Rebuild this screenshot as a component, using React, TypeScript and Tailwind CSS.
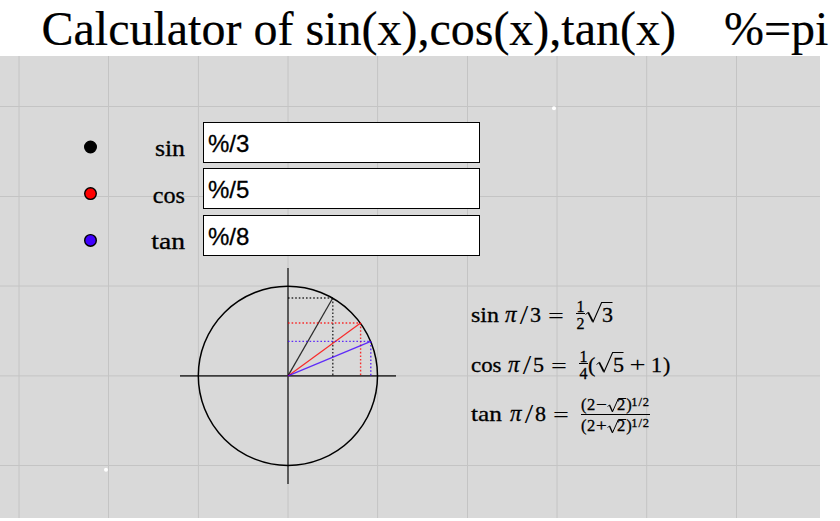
import type { ReactNode } from 'react';

const verticals = [19, 108.5, 198.4, 288, 377.6, 467.5, 557, 646.7, 736.5];
const horizontals = [50.5, 140.5, 230, 319.9, 409.5];

const functions = [
  { name: 'sin', value: '%/3', row: 'mb-[5px]', label: 'top-[7px] scale-x-[1.12]' },
  { name: 'cos', value: '%/5', row: 'mb-[6px]', label: 'top-[8px] scale-x-[1.05]' },
  { name: 'tan', value: '%/8', row: '', label: 'top-[7px] scale-x-[1.2]' },
];

// Ends of the three radii on the unit circle, relative to the board.
const rays = [
  { x: 332.8, y: 242, color: '#000000' },
  { x: 360.6, y: 267, color: '#ff0000' },
  { x: 370.8, y: 285.4, color: '#4000ff' },
];

function Board() {
  return (
    <svg className="absolute inset-0" width="820" height="462" viewBox="0 0 820 462" fill="none">
      <g stroke="#c4c4c4" strokeWidth="1">
        {verticals.map((x) => (
          <line key={x} x1={x} x2={x} y1="0" y2="462" />
        ))}
        {horizontals.map((y) => (
          <line key={y} x1="0" x2="820" y1={y} y2={y} />
        ))}
      </g>
      <circle cx="554" cy="52.3" r="2" fill="#fff" />
      <circle cx="106" cy="413.8" r="2" fill="#fff" />
      <path d="M180 319.9H396M288 212V428" stroke="#000" strokeOpacity=".7" strokeWidth="1.6" />
      <circle cx="287.9" cy="319.8" r="89.6" stroke="#000" strokeWidth="1.5" />
      {rays.map(({ x, y, color }) => (
        <g key={color} stroke={color} strokeOpacity=".8">
          <path d={`M288 319.9L${x} ${y}`} strokeWidth="1.25" />
          <path d={`M288 ${y}H${x}M${x} ${y}V320`} strokeWidth="1.4" strokeDasharray="1.6 2" />
        </g>
      ))}
      {/* Handles beside the three inputs */}
      <g stroke="#000" strokeWidth="1.4">
        <circle cx="90.5" cy="91" r="5.8" fill="#000" />
        <circle cx="90.5" cy="137.6" r="5.8" fill="#ff0000" />
        <circle cx="90.5" cy="184.4" r="5.8" fill="#4000ff" />
      </g>
    </svg>
  );
}

function Root({ className, children, small = false }: { className: string; children: ReactNode; small?: boolean }) {
  return (
    <span className={`relative inline-flex justify-end ${className}`}>
      {small ? (
        <svg className="absolute left-0 top-[2px]" width="20" height="16" viewBox="0 0 20 16" fill="none" stroke="#000">
          <path d="M.5 9.5L2.5 8" strokeWidth=".8" />
          <path d="M2.5 8L5.4 14.5" strokeWidth="1.4" />
          <path d="M5.4 15L11.4 1.5H19" strokeWidth="1" />
        </svg>
      ) : (
        <svg className="absolute left-0 top-[1px]" width="29" height="24" viewBox="0 0 29 24" fill="none" stroke="#000">
          <path d="M.5 13.5L3.3 11.4" strokeWidth=".9" />
          <path d="M3.2 11.4L7.8 20.5" strokeWidth="1.8" />
          <path d="M7.8 21.5L16.6 1.5H27.5" strokeWidth="1.1" />
        </svg>
      )}
      {children}
    </span>
  );
}

function SmallFraction({ bottom }: { bottom: string }) {
  return (
    <span className="flex w-[9px] flex-col items-center text-[16px] leading-[15px]">
      <span className="h-[14px]">1</span>
      <span className="h-px w-[9px] bg-black" />
      <span className="mt-[2px]">{bottom}</span>
    </span>
  );
}

function Left({ name, digit, width, stretch }: { name: string; digit: string; width: string; stretch: string }) {
  return (
    <>
      <span className={width}>
        <span className={`inline-block origin-left ${stretch}`}>{name}</span>
      </span>
      <span className="w-[13px] text-[23px] italic">π</span>
      <span className="w-[12px] origin-center scale-x-[1.45] scale-y-[1.3] text-center text-[21px] [-webkit-text-stroke:0px]">/</span>
      <span className="w-[18px]">{digit}</span>
      <span className="mt-[2px] w-[28px] origin-left scale-x-[1.28] [-webkit-text-stroke:0px]">=</span>
    </>
  );
}

function Power({ sign }: { sign: string }) {
  return (
    <span className="relative top-px flex h-[20px] items-center text-[16.5px] leading-[20px]">
      <span className="w-[6px]">(</span>
      <span className="w-[9px]">2</span>
      <span className="w-[11px] origin-center scale-x-[1.15] text-center">{sign}</span>
      <Root small className="w-[20px] pr-[1px]">2</Root>
      <span className="w-[5px]">)</span>
      <span className="relative top-[-3px] text-[12.5px] tracking-[0.9px]">1/2</span>
    </span>
  );
}

export default function App() {
  return (
    <main className="h-[521px] w-[840px] overflow-hidden bg-white font-['Liberation_Serif',serif] text-black">
      <h1 className="h-[56px] whitespace-pre pl-[41.5px] text-[48px] leading-[58px] [-webkit-text-stroke:0.2px_black]">
        Calculator of sin(x),cos(x),tan(x){'    '}%=pi
      </h1>
      <section className="relative h-[462px] w-[820px] bg-[#d9d9d9]">
        <Board />
        <div className="relative pl-[97px] pt-[66px]">
          {functions.map((f) => (
            <label key={f.name} className={`flex h-[41px] ${f.row}`}>
              <span
                className={`relative w-[88px] origin-right text-right text-[23px] leading-[40px] [-webkit-text-stroke:0.3px_black] ${f.label}`}
              >
                {f.name}
              </span>
              <input
                className="ml-[18px] h-[41px] w-[277px] border border-black bg-white pl-[4px] pt-[2px] font-['Liberation_Sans',sans-serif] text-[24px] leading-[37px] outline-none [-webkit-text-stroke:0.3px_black]"
                defaultValue={f.value}
              />
            </label>
          ))}
        </div>
        <div className="relative ml-[471px] mt-[41px] flex flex-col text-[22px] leading-[30px] [-webkit-text-stroke:0.3px_black]">
          <div className="flex h-[36px] items-center">
            <Left name="sin" digit="3" width="w-[34px]" stretch="scale-x-[1.09]" />
            <SmallFraction bottom="2" />
            <Root className="w-[28px]">3</Root>
          </div>
          <div className="mt-[14px] flex h-[36px] items-center">
            <Left name="cos" digit="5" width="w-[37px]" stretch="scale-x-[1.04]" />
            <SmallFraction bottom="4" />
            <span className="w-[8px]">(</span>
            <Root className="w-[28px]">5</Root>
            <span className="w-[27px] origin-center scale-x-[1.3] text-center [-webkit-text-stroke:0px]">+</span>
            <span className="w-[12px]">1</span>
            <span>)</span>
          </div>
          <div className="mt-[10px] flex h-[42px] items-center">
            <Left name="tan" digit="8" width="w-[39px]" stretch="scale-x-[1.15]" />
            <span className="flex w-[69px] flex-col">
              <Power sign="−" />
              <span className="h-px bg-black" />
              <Power sign="+" />
            </span>
          </div>
        </div>
      </section>
    </main>
  );
}
